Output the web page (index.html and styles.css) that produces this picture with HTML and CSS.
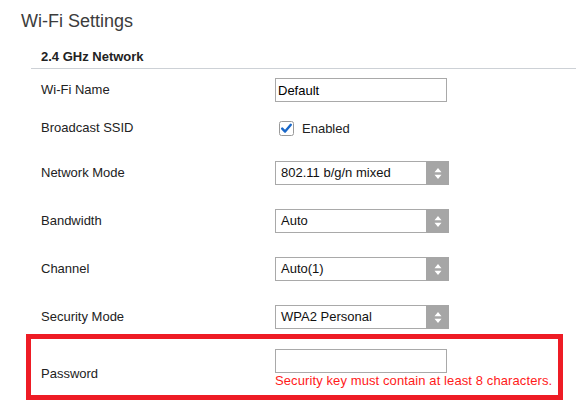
FILE: index.html
```html
<!DOCTYPE html>
<html>
<head>
<meta charset="utf-8">
<link rel="stylesheet" href="styles.css">
</head>
<body>
<div class="page">
  <h1 class="title">Wi-Fi Settings</h1>
  <div class="section">
    <div class="section-head">2.4 GHz Network</div>
    <div class="row row-name">
      <div class="label">Wi-Fi Name</div>
      <div class="control"><input class="text" type="text" value="Default"></div>
    </div>
    <div class="row row-ssid">
      <div class="label">Broadcast SSID</div>
      <div class="control check">
        <svg class="checkbox" width="15" height="15" viewBox="0 0 15 15">
          <rect x="0.5" y="0.5" width="14" height="14" rx="2" fill="#fff" stroke="#9a9a9a"/>
          <path d="M3.2 7.6 L6.1 10.6 L11.8 3.8" fill="none" stroke="#1a68c9" stroke-width="2.4" stroke-linecap="round" stroke-linejoin="round"/>
        </svg>
        <span class="check-label">Enabled</span>
      </div>
    </div>
    <div class="row row-sel first-sel">
      <div class="label">Network Mode</div>
      <div class="control">
        <div class="select"><span class="sel-value">802.11 b/g/n mixed</span><span class="sel-arrow"><svg width="8" height="13" viewBox="0 0 8 13"><path d="M4 1 L7.5 5.2 L0.5 5.2 Z M4 12 L7.5 7.8 L0.5 7.8 Z" fill="#fff"/></svg></span></div>
      </div>
    </div>
    <div class="row row-sel">
      <div class="label">Bandwidth</div>
      <div class="control">
        <div class="select"><span class="sel-value">Auto</span><span class="sel-arrow"><svg width="8" height="13" viewBox="0 0 8 13"><path d="M4 1 L7.5 5.2 L0.5 5.2 Z M4 12 L7.5 7.8 L0.5 7.8 Z" fill="#fff"/></svg></span></div>
      </div>
    </div>
    <div class="row row-sel">
      <div class="label">Channel</div>
      <div class="control">
        <div class="select"><span class="sel-value">Auto(1)</span><span class="sel-arrow"><svg width="8" height="13" viewBox="0 0 8 13"><path d="M4 1 L7.5 5.2 L0.5 5.2 Z M4 12 L7.5 7.8 L0.5 7.8 Z" fill="#fff"/></svg></span></div>
      </div>
    </div>
    <div class="row row-sel">
      <div class="label">Security Mode</div>
      <div class="control">
        <div class="select"><span class="sel-value">WPA2 Personal</span><span class="sel-arrow"><svg width="8" height="13" viewBox="0 0 8 13"><path d="M4 1 L7.5 5.2 L0.5 5.2 Z M4 12 L7.5 7.8 L0.5 7.8 Z" fill="#fff"/></svg></span></div>
      </div>
    </div>
    <div class="row row-error">
      <div class="label pw-label">Password</div>
      <div class="control pw-control">
        <input class="text" type="password" value="">
        <div class="error">Security key must contain at least 8 characters.</div>
      </div>
    </div>
  </div>
</div>
</body>
</html>
```

FILE: styles.css
```css
* { box-sizing: border-box; }
html, body { margin: 0; padding: 0; background: #fff; }
body {
  font-family: "Liberation Sans", Arial, sans-serif;
  font-size: 13px;
  color: #222;
  width: 576px;
  height: 415px;
  overflow: hidden;
}
.page { padding: 0; }
.title {
  margin: 0;
  padding: 8px 0 0 21px;
  font-size: 18px;
  font-weight: normal;
  line-height: 26px;
  color: #3c3c3c;
}
.section {
  margin-left: 31px;
}
.section-head {
  font-weight: bold;
  font-size: 13px;
  line-height: 16px;
  color: #222;
  padding: 15px 0 3px 10px;
  border-bottom: 1px solid #cdd1d6;
}
.row {
  display: flex;
  align-items: center;
}
.label {
  width: 244px;
  padding-left: 10px;
  line-height: 16px;
}
.control {
  display: flex;
  align-items: center;
}
.row-name { margin-top: 9px; height: 24px; }
.row-ssid { margin-top: 14px; height: 24px; }
.row-sel { margin-top: 24px; height: 24px; }
.row-sel.first-sel { margin-top: 21px; }
.text {
  width: 172px;
  height: 24px;
  border: 1px solid #a9a9a9;
  padding: 0 2px;
  font-family: "Liberation Sans", Arial, sans-serif;
  font-size: 13px;
  color: #000;
  background: #fff;
  outline: none;
  margin: 0;
}
.checkbox { margin-left: 4px; display: block; }
.check-label { margin-left: 8px; color: #222; }
.select {
  width: 174px;
  height: 24px;
  display: flex;
  border: 1px solid #a9a9a9;
  background: #fff;
}
.sel-value {
  flex: 1;
  padding-left: 5px;
  line-height: 22px;
  color: #111;
}
.sel-arrow {
  width: 23px;
  margin: -1px -1px -1px 0;
  background: #a6a6a6;
  display: flex;
  align-items: center;
  justify-content: center;
}
.sel-arrow svg { display: block; }
.row-error {
  margin: 5px 13px 0 -5px;
  border: 5px solid #ee1c25;
  padding: 10px 0 6px 0;
  align-items: center;
}
.pw-label { width: 244px; padding-left: 10px; padding-top: 10px; }
.pw-control {
  flex-direction: column;
  align-items: flex-start;
}
.error {
  color: #ff1a1a;
  line-height: 16px;
  margin-top: 0;
  letter-spacing: 0.1px;
  white-space: nowrap;
}
```
